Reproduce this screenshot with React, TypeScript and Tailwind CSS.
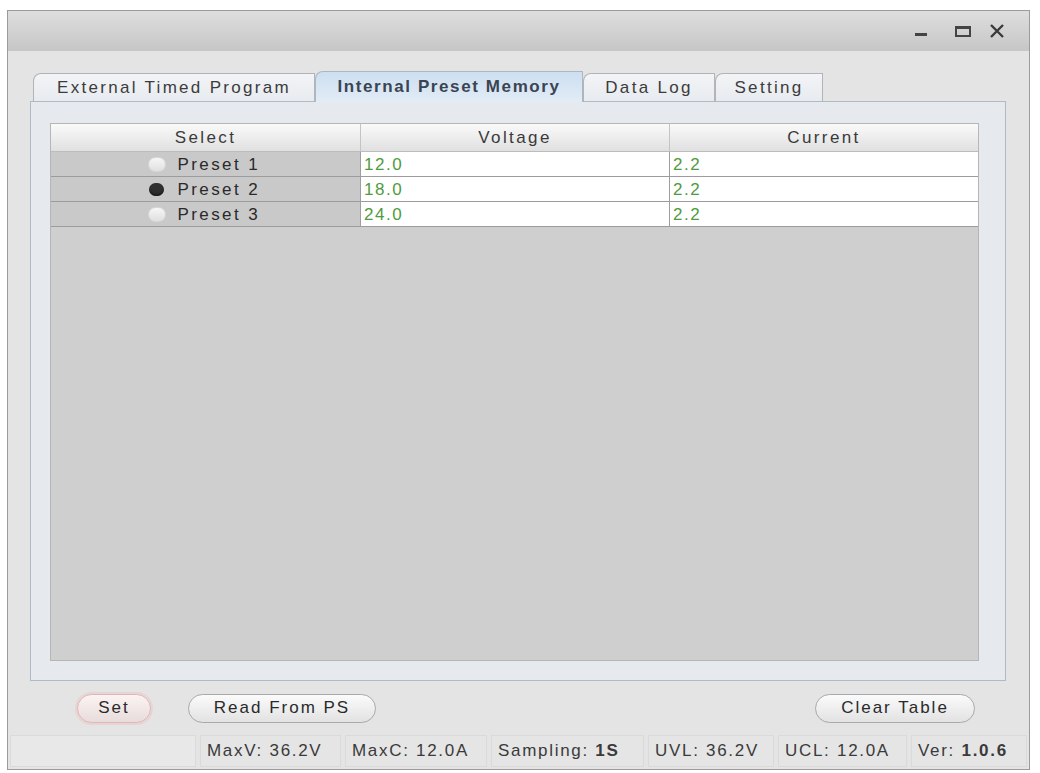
import React from 'react';

const font = { fontFamily: '"Liberation Sans", Arial, sans-serif' };

const presets = [
  { name: 'Preset 1', voltage: '12.0', current: '2.2', selected: false },
  { name: 'Preset 2', voltage: '18.0', current: '2.2', selected: true },
  { name: 'Preset 3', voltage: '24.0', current: '2.2', selected: false },
];

const tabs = [
  { label: 'External Timed Program', w: 'w-[282px]', active: false },
  { label: 'Internal Preset Memory', w: 'w-[268px]', active: true },
  { label: 'Data Log', w: 'w-[132px]', active: false },
  { label: 'Setting', w: 'w-[108px]', active: false },
];

const status = [
  { k: 'MaxV:', v: '36.2V', w: 'w-[141px]' },
  { k: 'MaxC:', v: '12.0A', w: 'w-[142px]' },
  { k: 'Sampling:', v: '1S', w: 'w-[153px]', bold: true },
  { k: 'UVL:', v: '36.2V', w: 'w-[126px]' },
  { k: 'UCL:', v: '12.0A', w: 'w-[129px]' },
  { k: 'Ver:', v: '1.0.6', w: 'flex-1', bold: true },
];

function Radio({ on }: { on: boolean }) {
  return on ? (
    <span className="inline-block h-[13px] w-[15px] rounded-full bg-[#2f2f2f] shadow-[inset_0_-2px_2px_rgba(0,0,0,0.4)]" />
  ) : (
    <span className="inline-block h-[15px] w-[18px] rounded-full border border-[#d8d8d8] bg-gradient-to-b from-[#f6f6f6] to-[#e0e0e0]" />
  );
}

function PillButton({ children, focused, w }: { children: React.ReactNode; focused?: boolean; w: string }) {
  return (
    <button
      className={`${w} h-[29px] rounded-full border text-[17px] tracking-[2px] text-[#2a2a2a] ${
        focused
          ? 'border-[#e2b4b4] bg-gradient-to-b from-[#fbf3f3] to-[#e8dcdc] shadow-[0_0_0_2px_rgba(232,196,196,0.45)]'
          : 'border-[#a9a9a9] bg-gradient-to-b from-[#fbfbfb] to-[#e2e2e2]'
      }`}
    >
      {children}
    </button>
  );
}

export default function App() {
  return (
    <div className="h-[773px] w-[1040px] overflow-hidden bg-white pl-[7px] pt-[10px]" style={font}>
      <div className="flex h-[760px] w-[1023px] flex-col border border-[#9b9b9b] bg-[#e4e4e4]">
        {/* Title bar */}
        <div className="flex h-[40px] items-center justify-end bg-gradient-to-b from-[#dedede] to-[#c6c6c6] pr-[24px]">
          <span className="mt-[6px] h-[3px] w-[12px] bg-[#444]" />
          <span className="ml-[28px] h-[11px] w-[16px] border-[2px] border-t-[3px] border-[#444]" />
          <svg width="16" height="14" viewBox="0 0 16 14" className="ml-[18px]">
            <path d="M2 1 L14 13 M14 1 L2 13" stroke="#3a3a3a" strokeWidth="2.4" />
          </svg>
        </div>

        {/* Body */}
        <div className="flex flex-1 flex-col px-[22px] pt-[20px]">
          {/* Tabs */}
          <div className="flex items-end pl-[3px]">
            {tabs.map((t) =>
              t.active ? (
                <div
                  key={t.label}
                  className={`${t.w} -mb-px z-10 flex h-[31px] items-center justify-center rounded-tl-[8px] border border-b-0 border-[#aab8c6] bg-gradient-to-b from-[#cddff0] to-[#e2ecf6] text-[17px] font-bold tracking-[1.6px] text-[#3a4452]`}
                >
                  {t.label}
                </div>
              ) : (
                <div
                  key={t.label}
                  className={`${t.w} flex h-[28px] items-center justify-center rounded-tl-[8px] border border-b-0 border-[#b4b4b4] bg-gradient-to-b from-[#f2f4f7] to-[#e8ebef] text-[17px] tracking-[2.3px] text-[#3c3c3c]`}
                >
                  {t.label}
                </div>
              )
            )}
          </div>

          {/* Tab panel */}
          <div className="h-[580px] w-[976px] border border-[#aebac6] bg-[#e6e9ed] pb-[19px] pl-[19px] pr-[26px] pt-[21px]">
            <div className="flex h-full flex-col border border-[#b6b6b6] bg-[#cfcfcf]">
              {/* header */}
              <div className="grid h-[28px] grid-cols-[309px_309px_1fr] border-b border-[#bcbcbc] bg-gradient-to-b from-[#fafafa] to-[#e0e0e0] text-[17px] leading-none tracking-[2.4px] text-[#3a3a3a]">
                <div className="flex items-center justify-center">Select</div>
                <div className="flex items-center justify-center border-l border-[#c4c4c4]">Voltage</div>
                <div className="flex items-center justify-center border-l border-[#c4c4c4]">Current</div>
              </div>
              {presets.map((p) => (
                <div
                  key={p.name}
                  className="grid h-[25px] grid-cols-[309px_309px_1fr] border-b border-[#9c9c9c] text-[17px] leading-none tracking-[2.4px]"
                >
                  <div className="flex items-center justify-center gap-[12px] bg-[#c9c9c9] text-[#2a2a2a]">
                    <span className="flex w-[18px] justify-center">
                      <Radio on={p.selected} />
                    </span>
                    <span className="w-[86px]">{p.name}</span>
                  </div>
                  <div className="flex items-center border-l border-[#9e9e9e] bg-white pl-[3px] tracking-[1.5px] text-[#4f9b40]">
                    {p.voltage}
                  </div>
                  <div className="flex items-center border-l border-[#9e9e9e] bg-white pl-[3px] tracking-[1.5px] text-[#4f9b40]">
                    {p.current}
                  </div>
                </div>
              ))}
              <div className="flex-1" />
            </div>
          </div>

          {/* Buttons */}
          <div className="flex h-[54px] items-center pl-[47px] pr-[32px]">
            <PillButton w="w-[74px]" focused>
              Set
            </PillButton>
            <div className="w-[37px]" />
            <PillButton w="w-[188px]">Read From PS</PillButton>
            <div className="flex-1" />
            <PillButton w="w-[160px]">Clear Table</PillButton>
          </div>
        </div>

        {/* Status bar */}
        <div className="mx-[2px] mb-[2px] flex h-[32px] items-stretch gap-[4px] text-[17px] tracking-[1.7px] text-[#3a3a3a]">
          <div className="w-[186px] border border-[#dadada] bg-[#e8e8e8]" />
          {status.map((s) => (
            <div key={s.k} className={`${s.w} flex items-center border border-[#dadada] bg-[#e5e5e5] pl-[6px]`}>
              <span>{s.k}&nbsp;</span>
              <span className={s.bold ? 'font-bold' : ''}>{s.v}</span>
            </div>
          ))}
        </div>
      </div>
    </div>
  );
}
